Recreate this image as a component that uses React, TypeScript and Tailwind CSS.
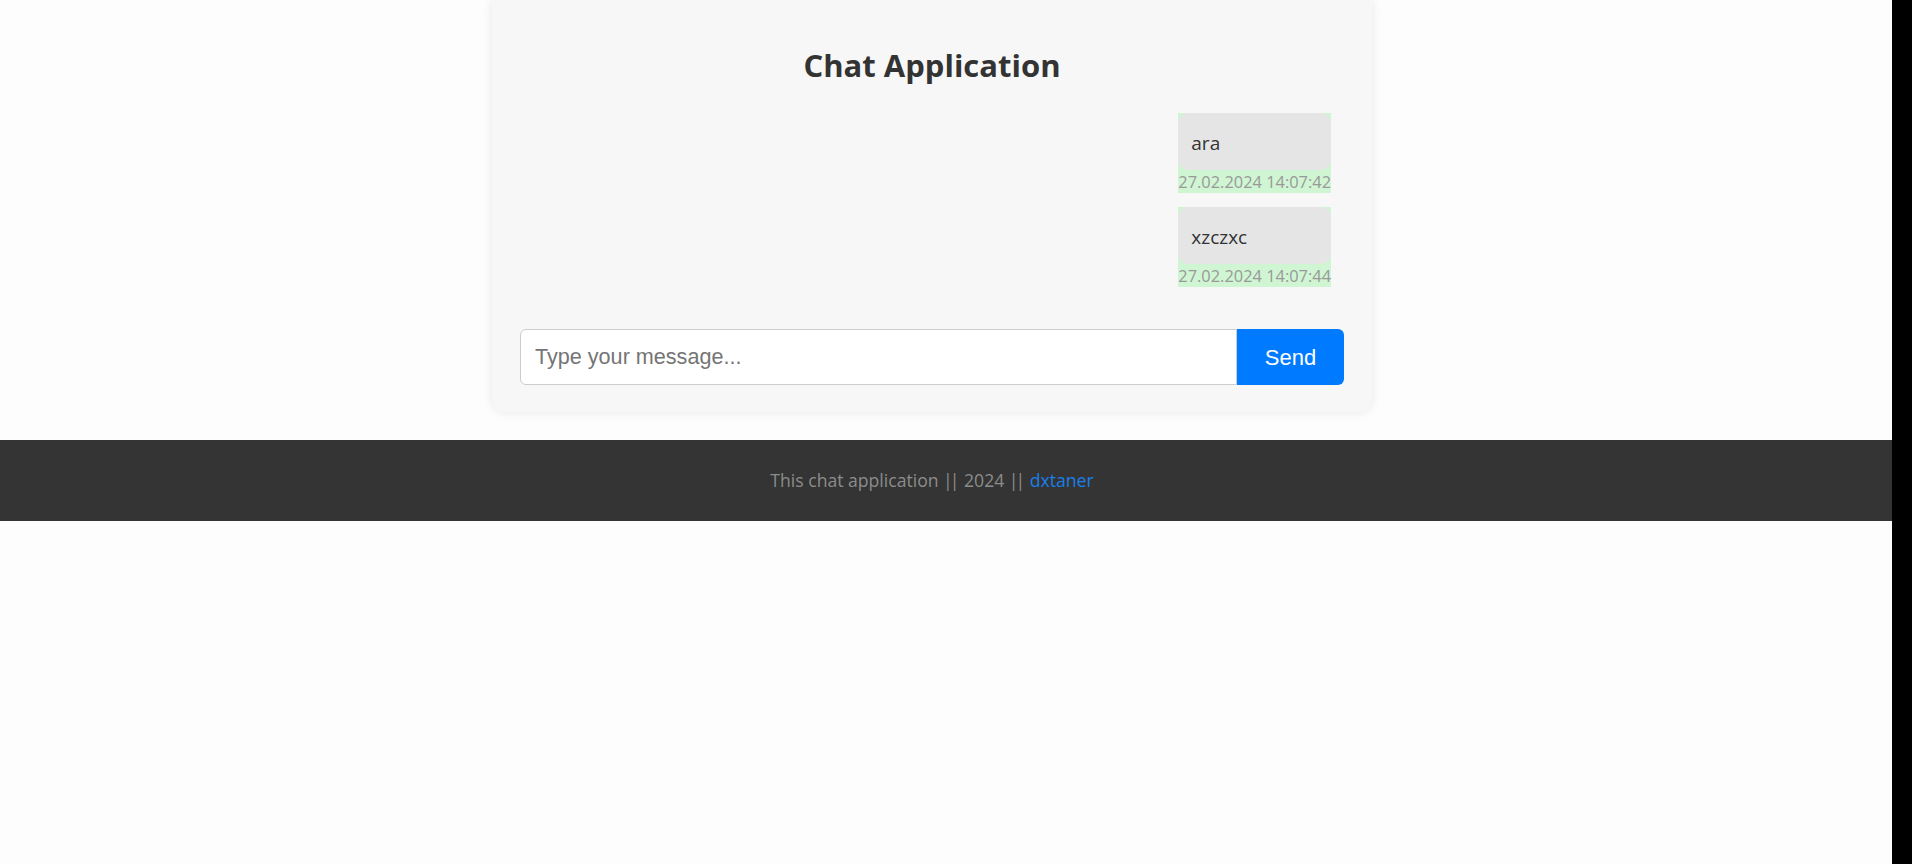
import { useState } from 'react'

interface Message {
  id: number
  text: string
  time: string
}

const initialMessages: Message[] = [
  { id: 1, text: 'ara', time: '27.02.2024 14:07:42' },
  { id: 2, text: 'xzczxc', time: '27.02.2024 14:07:44' },
]

export default function App() {
  const [messages] = useState<Message[]>(initialMessages)
  const [draft, setDraft] = useState('')

  return (
    <div className="flex min-h-[864px] bg-[#fdfdfd] font-['Open_Sans',sans-serif]">
      <div className="flex w-[1892px] flex-col">
        {/* Chat card */}
        <div className="w-[1864px]">
          <div className="mx-auto w-[880px] rounded-b-[14px] bg-[#f7f7f7] px-[28px] pb-[27px] pt-[44px] shadow-[0_0_12px_rgba(0,0,0,0.09)]">
            <h2 className="text-center text-[31px] font-bold leading-[42px] text-[#333]">
              Chat Application
            </h2>

            <div className="mt-[27px] flex flex-col items-end gap-[14px] pr-[13px]">
              {messages.map((m) => (
                <div key={m.id} className="flex flex-col bg-[#cff5d3]">
                  <div className="rounded-[10px] bg-[#e5e5e5] px-[13px] pb-[14px] pt-[18px] text-[19px] leading-[25px] text-[#333]">
                    {m.text}
                  </div>
                  <span className="whitespace-nowrap text-[16.4px] leading-[23px] text-[#999]">{m.time}</span>
                </div>
              ))}
            </div>

            <div className="mt-[42px] flex h-[56px]">
              <input
                value={draft}
                onChange={(e) => setDraft(e.target.value)}
                placeholder="Type your message..."
                className="flex-1 rounded-l-[6px] border border-[#ccc] bg-white px-[14px] font-['Liberation_Sans',Arial,sans-serif] text-[21.6px] text-[#333] outline-none placeholder:text-[#757575]"
              />
              <button className="w-[107px] rounded-r-[6px] bg-[#007bff] font-['Liberation_Sans',Arial,sans-serif] text-[22px] text-white">
                Send
              </button>
            </div>
          </div>
        </div>

        {/* Footer */}
        <footer className="mt-[28px] flex h-[81px] items-center justify-center bg-[#333433] pr-[28px] text-[17.6px] text-[#8c8c8c]">
          <p>
            This chat application <span className="tracking-[-3px] pr-[3px]">||</span> 2024{' '}
            <span className="tracking-[-3px] pr-[3px]">||</span>{' '}
            <a className="text-[#1a7fe8]">dxtaner</a>
          </p>
        </footer>
      </div>
      <div className="w-[20px] bg-black" />
    </div>
  )
}
